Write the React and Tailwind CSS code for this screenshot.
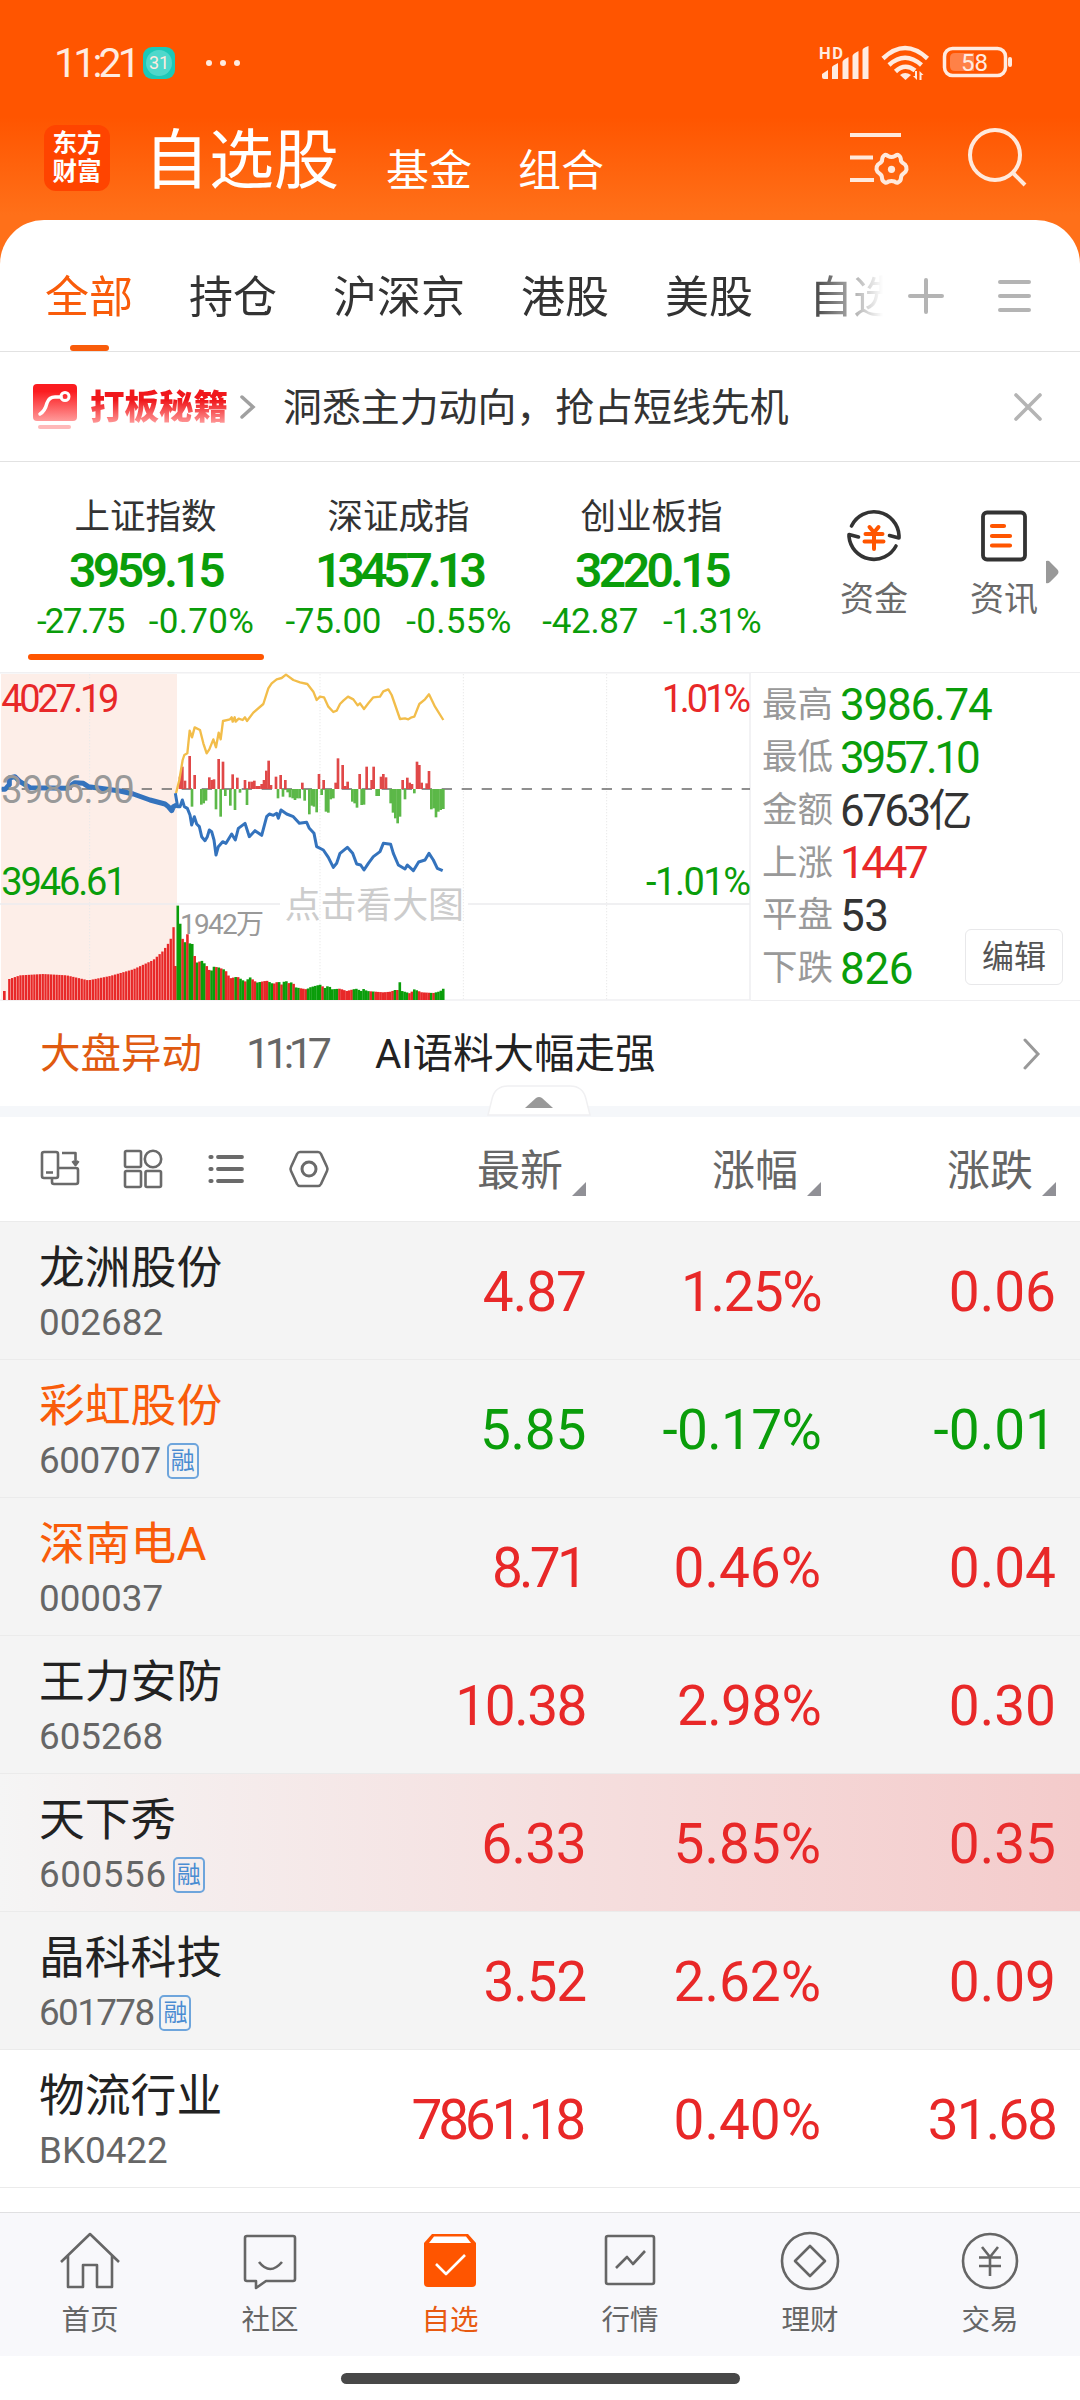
const RED = 'text-[#e82828]';
const GREEN = 'text-[#0a9d0a]';

const TABS = ['全部', '持仓', '沪深京', '港股', '美股', '自选'];

const INDICES = [
  { name: '上证指数', value: '3959.15', diff: '-27.75', pct: '-0.70%', vt: 'tracking-[-3.6px]', dt: 'tracking-[-1.8px]', active: true },
  { name: '深证成指', value: '13457.13', diff: '-75.00', pct: '-0.55%', vt: 'tracking-[-4.8px]', dt: 'tracking-[-0.3px]' },
  { name: '创业板指', value: '3220.15', diff: '-42.87', pct: '-1.31%', vt: 'tracking-[-3.6px]', dt: 'tracking-[-0.3px]' },
];

const STATS = [
  { label: '最高', value: '3986.74', color: GREEN, track: 'tracking-[-1.2px]' },
  { label: '最低', value: '3957.10', color: GREEN, track: 'tracking-[-3.2px]' },
  { label: '金额', value: '6763亿', color: 'text-[#333]', track: 'tracking-[-2.6px]' },
  { label: '上涨', value: '1447', color: RED, track: 'tracking-[-3.4px]' },
  { label: '平盘', value: '53', color: 'text-[#333]', track: 'tracking-[-0.5px]' },
  { label: '下跌', value: '826', color: GREEN, track: 'tracking-[-0.3px]' },
];

const STOCKS = [
  { name: '龙洲股份', code: '002682', price: '4.87', pct: '1.25%', diff: '0.06', pt: 'tracking-[-1px]', ct: 'tracking-[-1.5px]' },
  { name: '彩虹股份', code: '600707', price: '5.85', pct: '-0.17%', diff: '-0.01', hot: true, margin: true, down: true, codeTrack: 'tracking-[-0.4px]', pt: 'tracking-[-0.3px]', ct: 'tracking-[-0.7px]' },
  { name: '深南电A', code: '000037', price: '8.71', pct: '0.46%', diff: '0.04', hot: true, pt: 'tracking-[-3.8px] pr-[2px]' },
  { name: '王力安防', code: '605268', price: '10.38', pct: '2.98%', diff: '0.30', pt: 'tracking-[-1.5px]', ct: 'tracking-[-0.7px]' },
  { name: '天下秀', code: '600556', price: '6.33', pct: '5.85%', diff: '0.35', margin: true, flash: true, codeTrack: 'tracking-[0.6px]', pt: 'tracking-[-0.6px]' },
  { name: '晶科科技', code: '601778', price: '3.52', pct: '2.62%', diff: '0.09', margin: true, codeTrack: 'tracking-[-1.6px]', pt: 'tracking-[-1.2px]' },
  { name: '物流行业', code: 'BK0422', price: '7861.18', pct: '0.40%', diff: '31.68', plain: true, pt: 'tracking-[-4.2px] pr-[4px]', dt: 'tracking-[-2px]' },
];

const AVG_LINE =
  '528,400 538,360 548,300 553,285 562,280 569,212 576,232 584,202 600,210 610,250 620,280 628,268 640,238 648,262 656,218 662,238 669,183 690,178 695,172 698,185 704,172 707,185 716,176 728,180 735,172 741,183 760,158 790,132 805,85 815,70 830,58 845,54 858,44 880,60 900,67 922,72 940,95 950,120 960,110 972,112 985,140 1000,156 1010,152 1020,132 1030,122 1044,110 1060,118 1073,136 1080,130 1092,147 1105,130 1120,112 1140,110 1150,94 1165,88 1175,105 1200,177 1215,175 1225,178 1235,172 1243,170 1258,132 1275,118 1287,103 1305,140 1330,180';
const OPEN_LINE =
  '5,388 15,388 28,374 28,354 45,350 60,365 90,383 200,385 225,368 250,370 265,380 300,385 360,393 400,402 450,420 495,432 505,440 515,452 520,440 530,435';
const PRICE_LINE =
  '526,400 533,440 540,440 547,420 553,440 562,445 570,465 575,495 583,470 590,492 598,500 605,530 615,542 622,530 628,510 635,515 642,540 648,585 655,560 668,545 678,550 695,522 706,540 715,505 735,490 748,530 765,512 785,526 800,470 808,462 820,466 830,460 835,475 843,450 860,462 880,470 898,490 920,487 928,505 942,520 950,560 970,570 985,592 1000,622 1010,610 1020,580 1042,562 1058,580 1070,612 1082,615 1092,630 1105,610 1120,590 1140,575 1150,550 1172,553 1180,580 1195,615 1215,627 1222,615 1240,632 1256,606 1275,600 1287,580 1300,600 1312,625 1328,632';

const UP_BARS = [
  [540, 350], [547, 320], [555, 362], [569, 288], [584, 345], [628, 352], [635, 360], [642, 358], [656, 297], [669, 305],
  [698, 343], [712, 353], [735, 360], [748, 365], [756, 365], [763, 362], [770, 378], [778, 378], [785, 372], [792, 360],
  [799, 332], [806, 302], [813, 375], [828, 350], [842, 345], [856, 360], [907, 368], [957, 342], [971, 360], [1007, 368],
  [1014, 295], [1028, 315], [1036, 378], [1043, 365], [1079, 342], [1100, 320], [1115, 360], [1121, 320], [1143, 350],
  [1150, 342], [1158, 352], [1208, 360], [1222, 353], [1229, 368], [1236, 372], [1251, 305], [1258, 315], [1265, 368],
  [1280, 370], [1287, 333],
];
const DOWN_BARS = [
  [576, 440], [604, 434], [611, 430], [618, 422], [648, 448], [662, 470], [676, 408], [691, 437], [705, 450], [720, 398],
  [741, 435], [834, 415], [849, 410], [863, 397], [870, 412], [878, 415], [885, 420], [892, 415], [899, 415], [914, 422],
  [928, 463], [935, 437], [942, 440], [950, 457], [965, 405], [978, 455], [985, 458], [992, 418], [1000, 415], [1057, 425],
  [1064, 430], [1071, 443], [1085, 435], [1092, 434], [1130, 408], [1136, 408], [1172, 430], [1179, 458], [1186, 475],
  [1193, 490], [1200, 470], [1215, 418], [1243, 400], [1294, 448], [1301, 445], [1308, 472], [1315, 455], [1322, 450], [1330, 447],
];

const OPEN_VOLUME = [[28, 957], [60, 946], [130, 942], [200, 946], [265, 961], [330, 948], [400, 928], [460, 900], [490, 872], [505, 850], [513, 835], [521, 800]];
const VOLUME = [
  [526, 918], [533, 735], [540, 788], [547, 835], [554, 850], [562, 822], [569, 850], [577, 852], [583, 885], [590, 908], [605, 902],
  [618, 915], [632, 937], [640, 920], [655, 922], [676, 930], [690, 955], [712, 950], [735, 965], [750, 952], [770, 968], [800, 962],
  [820, 972], [835, 964], [845, 974], [856, 960], [864, 970], [878, 966], [886, 982], [920, 988], [930, 982], [960, 974], [978, 986], [985, 974],
  [994, 988], [1020, 986], [1040, 993], [1068, 986], [1084, 993], [1092, 986], [1100, 993], [1150, 997], [1172, 995], [1185, 990], [1196, 990],
  [1200, 962], [1206, 993], [1230, 1000], [1243, 988], [1265, 997], [1300, 999], [1320, 994], [1330, 986],
];
const VOLUME_COLORS = 'rggrgrggrgrggrrggrgrgrrrrgrggrggrrggrrrggrrgrggrgrggrrrggggggrggggggrrrrrrgggggggrgrrrrrrrrgrggggrrggrrrrrgrggggggg';

function levelAt(points, x) {
  const i = points.findIndex((p) => p[0] >= x);
  if (i <= 0) return points[i === 0 ? 0 : points.length - 1][1];
  const [x0, y0] = points[i - 1];
  const [x1, y1] = points[i];
  return y0 + ((y1 - y0) * (x - x0)) / (x1 - x0);
}

function IntradayChart() {
  const openBars = Array.from({ length: 60 }, (_, i) => 28 + i * 8.35);
  const bars = Array.from({ length: 112 }, (_, i) => 526 + i * 7.24);
  return (
    <svg className="h-[329px] w-[751px] shrink-0" viewBox="0 36 2253 987" fill="none">
      <rect x="3" y="42" width="528" height="980" fill="#fdeee8" />
      <g stroke="#e9e9e9" strokeWidth="3" strokeDasharray="4 5">
        <path d="M269 42V1020M960 42V1020M1390 42V1020M1820 42V1020" />
      </g>
      <path d="M0 38H2253M0 1020H2253M2250 36V1022" stroke="#f0f0f2" strokeWidth="5" />
      <path d="M0 732H840M1404 732H2250" stroke="#ebebee" strokeWidth="5" />
      <path d="M5 387H2250" stroke="#6b6b6b" strokeWidth="5" strokeDasharray="31 29" />
      {UP_BARS.map(([x, y]) => (
        <rect key={x} x={x - 4} y={y} width="8" height={387 - y} fill="#e04848" />
      ))}
      {DOWN_BARS.map(([x, y]) => (
        <rect key={x} x={x - 4} y="387" width="8" height={y - 387} fill="#5cb848" />
      ))}
      <rect x="9" y="993" width="8" height="27" fill="#e82828" />
      {openBars.map((x) => (
        <rect key={x} x={x - 3.5} y={levelAt(OPEN_VOLUME, x)} width="7" height={1020 - levelAt(OPEN_VOLUME, x)} fill="#e82828" />
      ))}
      {bars.map((x, i) => (
        <rect
          key={x}
          x={x - 3.8}
          y={levelAt(VOLUME, x)}
          width="7.8"
          height={1020 - levelAt(VOLUME, x)}
          fill={VOLUME_COLORS[i] === 'r' ? '#e82828' : '#0a9d0a'}
        />
      ))}
      <polyline points={AVG_LINE} stroke="#f2bd4a" strokeWidth="7" strokeLinejoin="round" />
      <polyline points={OPEN_LINE} stroke="#3473bd" strokeWidth="15" strokeLinejoin="round" />
      <polyline points={PRICE_LINE} stroke="#3473bd" strokeWidth="9" strokeLinejoin="round" />
      <g fontSize="114">
        <text x="4" y="155" textLength="354" fill="#e82828">4027.19</text>
        <text x="4" y="430" textLength="400" fill="#999">3986.90</text>
        <text x="4" y="704" textLength="376" fill="#0a9d0a">3946.61</text>
        <text x="1985" y="155" textLength="268" fill="#e82828">1.01%</text>
        <text x="1938" y="704" textLength="315" fill="#0a9d0a">-1.01%</text>
        <text x="540" y="822" fontSize="84" textLength="252" fill="#999">1942万</text>
        <text x="854" y="774" fontSize="108" textLength="538" fill="#ccc">点击看大图</text>
      </g>
    </svg>
  );
}

function StatusBar() {
  return (
    <div className="flex h-[115px] items-center pl-[54px] pr-[67px] pt-[11px] text-[#ffebe0]">
      <span className="w-[79px] whitespace-nowrap text-[41px] leading-none tracking-[-3.8px]">11:21</span>
      <span className="ml-[10px] flex h-8 w-8 items-center justify-center rounded-[9px] bg-[#1cc9b8]">
        <span className="flex h-[26px] w-[26px] items-center justify-center rounded-full bg-[#4fd8cb] text-[18px] leading-none">31</span>
      </span>
      <span className="ml-[31px] flex gap-2">
        <i className="h-1.5 w-1.5 rounded-full bg-current" />
        <i className="h-1.5 w-1.5 rounded-full bg-current" />
        <i className="h-1.5 w-1.5 rounded-full bg-current" />
      </span>
      <svg className="ml-auto h-9 w-[194px]" viewBox="0 0 194 36" fill="none">
        <text x="0" y="14" fontSize="16.5" fontWeight="700" fill="currentColor" textLength="24">HD</text>
        <g fill="currentColor">
          <path d="M3 29l6-4v9H5q-2 0-2-2zM13 22q0-1 6-4v16h-6zM23.500 17q0-2 6-5v22h-6zM33.500 11q0-2 6-5v28h-6zM43.500 5q0-2 6-4v33h-6z" />
          <path d="M81 30q5-4 11 0l-5.500 5z" />
          <path d="M98 26v9l-4-4h2v-5zM100.500 35v-9l4 4h-2v5z" />
        </g>
        <g stroke="currentColor" strokeWidth="4.500">
          <path d="M64 13.500Q86-7.500 108.500 13.500" />
          <path d="M70 20Q86 5.500 102.500 20" />
          <path d="M76.500 26.500Q86 17.500 96 25.500" />
        </g>
        <rect x="125.500" y="3.500" width="61" height="27" rx="8" stroke="currentColor" strokeWidth="3.500" />
        <path d="M136 8h19v18h-19q-5 0-5-5v-8q0-5 5-5z" fill="#ff8147" />
        <rect x="189" y="12" width="4" height="10" rx="2" fill="currentColor" />
        <text x="142" y="26" fontSize="24" fill="currentColor" textLength="27">58</text>
      </svg>
    </div>
  );
}

function Header() {
  return (
    <header className="h-[264px] bg-[linear-gradient(#ff5500_0px,#ff5500_117px,#ff7019_215px,#ff7019_264px)]">
      <StatusBar />
      <div className="flex h-[105px] whitespace-nowrap pl-11 text-white">
        <div className="mt-[10px] flex h-[66px] w-[66px] flex-col items-center justify-center rounded-xl bg-[#ff4400] text-[24.500px] font-bold leading-[28px]">
          <span>东方</span>
          <span>财富</span>
        </div>
        <h1 className="ml-[34px] mt-3 w-[196px] text-[65px] leading-[68px]">自选股</h1>
        <span className="ml-[46px] mt-8 text-[43px] leading-[48px]">基金</span>
        <span className="ml-[46px] mt-8 text-[43px] leading-[48px]">组合</span>
        <svg className="ml-auto mr-[52px] mt-[12px] h-[62px] w-[180px] text-[#ffe9dc]" viewBox="0 -2 180 62" fill="none" stroke="currentColor" strokeWidth="4">
          <path d="M2 6h51M2 28.500h23M2 51h24" />
          <path
            d="M36 26.500Q38 25 40 27Q43.500 29 47 27Q49 25 51 26.500Q53 28 53 32Q54 34 57 35.500Q58.500 37 58.500 40.500Q58 43 55.500 44.500Q53 46 53 49Q53 52 50 53.500Q48 54 46.500 52.500Q43.500 51.500 40.500 52.500Q39 54 37 53.500Q34 52 34 49Q34 46 31.500 44.500Q29 43 28.500 40.500Q28.500 37 30 35.500Q33 34 34 32Q34 28 36 26.500z"
            strokeLinejoin="round"
          />
          <circle cx="43.500" cy="40.300" r="3.600" fill="currentColor" stroke="none" />
          <circle cx="147" cy="26" r="25" />
          <path d="M165 44l12 12" />
        </svg>
      </div>
    </header>
  );
}

function TabRow() {
  return (
    <div className="flex h-[132px] items-center border-b border-[#e2e2e2] pl-[45px]">
      <div className="flex h-full w-[838px] gap-14 overflow-hidden whitespace-nowrap text-[44px] leading-[156px] text-[#333] [mask-image:linear-gradient(90deg,#000_91%,transparent_100%)]">
        {TABS.map((t, i) => (
          <div key={t} className={i === 0 ? 'flex flex-col items-center text-[#f95c0a]' : ''}>
            <div className="h-[125px]">{t}</div>
            {i === 0 && <div className="h-1.5 w-[39px] rounded-full bg-[#f95c0a]" />}
          </div>
        ))}
      </div>
      <svg className="ml-[23px] mt-[21px] h-10 w-[128px]" viewBox="0 0 128 40" stroke="#b4b4b4" strokeWidth="4" strokeLinecap="round">
        <path d="M4 20h32M20 4v32M94 6h29M94 20h29M94 34h29" />
      </svg>
    </div>
  );
}

function Banner() {
  return (
    <div className="flex h-[110px] items-center border-b border-[#e2e2e2] pl-[33px]">
      <svg className="h-[46px] w-11" viewBox="0 0 44 46" fill="none">
        <defs>
          <linearGradient id="badge" x1="0" y1="0" x2="0" y2="1">
            <stop offset="0.2" stopColor="#fb1c20" />
            <stop offset="1" stopColor="#ff9a9a" />
          </linearGradient>
        </defs>
        <rect width="44" height="37" rx="4" fill="url(#badge)" />
        <path d="M7 30Q12 27 14 19Q16 13 22 13H28" stroke="#fff" strokeWidth="3.500" strokeLinecap="round" />
        <circle cx="32" cy="12.500" r="4" stroke="#fff" strokeWidth="3" />
        <path d="M7 43h29" stroke="#ffb9b9" strokeWidth="4" strokeLinecap="round" />
      </svg>
      <span className="ml-[13px] bg-[linear-gradient(#f0181c_35%,#ff9c9c_88%)] bg-clip-text text-[34.500px] font-black leading-[44px] text-transparent">打板秘籍</span>
      <svg className="ml-3 h-6 w-4" viewBox="0 0 16 24" fill="none" stroke="#a0a0a0" strokeWidth="3.500" strokeLinecap="round">
        <path d="M2 2l11 10L2 22" />
      </svg>
      <span className="ml-[27px] mt-1 text-[38.900px] leading-none text-[#333]">洞悉主力动向，抢占短线先机</span>
      <svg className="ml-auto mr-[37px] h-[30px] w-[30px]" viewBox="0 0 30 30" stroke="#b4b4b4" strokeWidth="3.600" strokeLinecap="round">
        <path d="M3 3l24 24M27 3L3 27" />
      </svg>
    </div>
  );
}

function IndexBar() {
  return (
    <div className="flex h-[210px] whitespace-nowrap pl-[19px]">
      {INDICES.map((x) => (
        <div key={x.name} className="flex w-[253px] shrink-0 flex-col items-center">
          <span className="mt-8 text-[35.500px] leading-[46px] text-[#333]">{x.name}</span>
          <span className={`mt-1.5 text-[48px] font-semibold leading-[50px] ${GREEN} ${x.vt}`}>{x.value}</span>
          <span className={`mt-[5px] flex gap-[25px] text-[35px] leading-[42px] ${GREEN}`}>
            <span className={x.dt}>{x.diff}</span>
            <span className={x.pct === '-1.31%' ? 'tracking-[-1px]' : 'tracking-[0.3px]'}>{x.pct}</span>
          </span>
          {x.active && <i className="mt-[11px] h-1.5 w-[236px] rounded-full bg-[#ff5500]" />}
        </div>
      ))}
      <div className="ml-[61px] flex w-[70px] shrink-0 flex-col items-center pt-[46px] text-[34px] leading-[40px] text-[#6a6a6a]">
        <svg className="h-14 w-14" viewBox="0 0 56 56" fill="none" strokeLinecap="round" strokeLinejoin="round">
          <path d="M5.500 18A25 25 0 0 1 53 27.500V30L43.500 27.500M50 38A25 25 0 0 1 3 28.500V26.500L12.500 29" stroke="#333" strokeWidth="3.600" />
          <path d="M23.500 19l4.500 5.500 4.500-5.500M19.500 26h17M18.500 33.500h19M28 25v16" stroke="#ff5500" strokeWidth="4" />
        </svg>
        <span className="mt-[15px]">资金</span>
      </div>
      <div className="ml-[60px] flex w-[70px] shrink-0 flex-col items-center pt-[46px] text-[34px] leading-[40px] text-[#6a6a6a]">
        <svg className="h-14 w-12" viewBox="0 0 48 56" fill="none" strokeLinecap="round">
          <rect x="3" y="4.500" width="42" height="47" rx="4" stroke="#333" strokeWidth="3.800" />
          <path d="M12 18h12M12 28h18M12 37.500h18" stroke="#ff5500" strokeWidth="4.200" />
        </svg>
        <span className="mt-[15px]">资讯</span>
      </div>
      <svg className="ml-[6px] mt-[98px] h-6 w-4 shrink-0" viewBox="0 0 16 24" fill="#999">
        <path d="M1 1q3-1 4 1l7 7q3 3 0 6l-7 7q-2 2-4 1z" />
      </svg>
    </div>
  );
}

function ChartPanel() {
  return (
    <div className="flex h-[329px]">
      <IntradayChart />
      <div className="relative flex flex-1 flex-col border-y border-[#eeeef0] pl-[11px] pt-1.5">
        {STATS.map((s) => (
          <div key={s.label} className="flex h-[52.700px] items-center whitespace-nowrap leading-none">
            <span className="w-[78px] text-[35.500px] text-[#999]">{s.label}</span>
            <span className={`text-[44px] ${s.color} ${s.track}`}>{s.value}</span>
          </div>
        ))}
        <button className="absolute bottom-[15px] right-[17px] h-14 w-[98px] rounded-md border border-[#e8e8ea] bg-white text-[32px] leading-none text-[#555]">
          编辑
        </button>
      </div>
    </div>
  );
}

function NewsRow() {
  return (
    <div className="relative flex h-[116px] items-center border-b-[11px] border-[#f5f7fa] pl-10 text-[40.500px] leading-none">
      <span className="mt-0.5 text-[#e05a10]">大盘异动</span>
      <span className="ml-[44px] w-[85px] whitespace-nowrap text-[43px] tracking-[-5.300px] text-[#666]">11:17</span>
      <span className="ml-[44px] mt-0.5 text-[#222]">AI语料大幅走强</span>
      <svg className="ml-auto mr-[39px] h-8 w-[18px]" viewBox="0 0 18 32" fill="none" stroke="#999" strokeWidth="3" strokeLinecap="round">
        <path d="M2 2l13 14L2 30" />
      </svg>
      <svg className="absolute left-[486px] top-[83px] h-8 w-[106px]" viewBox="0 0 106 32">
        <path d="M2 31L6 15Q9 2 22 2H84Q97 2 100 15L104 31z" fill="#fff" stroke="#f0f0f2" strokeWidth="1.500" />
        <path d="M39 24L50 14q3-2 6 0L67 24z" fill="#999" />
      </svg>
    </div>
  );
}

function ColumnHead({ children }) {
  return (
    <div className="flex w-[235px] items-end justify-end">
      <span className="leading-[50px]">{children}</span>
      <svg className="ml-[9px] h-3.5 w-3.5" viewBox="0 0 14 14" fill="#909096">
        <path d="M14 0v14H0z" />
      </svg>
    </div>
  );
}

function TableHead() {
  return (
    <div className="flex h-[105px] items-center border-b border-[#ebebeb] pl-10 pr-6 text-[43px] text-[#666]">
      <svg className="h-10 w-[290px] shrink-0" viewBox="0 0 290 40" fill="none" stroke="#6a6a6a" strokeWidth="2.600" strokeLinejoin="round">
        <path d="M4 3h12q2 0 2 2v22q0 2-2 2H4q-2 0-2-2V5q0-2 2-2zM6 23.500h7M18 19h18q2 0 2 2v12q0 2-2 2H14q-2 0-2-2v-4M22 4h13.500v11M32.500 12l3 4 3-4" />
        <rect x="85" y="2" width="16" height="16" rx="1.500" />
        <circle cx="113" cy="10" r="8.200" />
        <rect x="85" y="22" width="16" height="16" rx="1.500" />
        <rect x="105.500" y="22" width="15.500" height="16" rx="1.500" />
        <path d="M178 8h24M178 20h24M178 32h24" strokeWidth="3.800" strokeLinecap="round" />
        <path d="M170.500 8h1M170.500 20h1M170.500 32h1" strokeWidth="4.200" strokeLinecap="round" />
        <path d="M260 3h18q2 0 3 2l6 13q1 2 0 4l-6 13q-1 2-3 2h-18q-2 0-3-2l-6-13q-1-2 0-4l6-13q1-2 3-2z" />
        <circle cx="269" cy="20" r="7" strokeWidth="3" />
      </svg>
      <div className="ml-auto flex pt-[3px]">
        <ColumnHead>最新</ColumnHead>
        <ColumnHead>涨幅</ColumnHead>
        <ColumnHead>涨跌</ColumnHead>
      </div>
    </div>
  );
}

function StockRow({ s }) {
  const bg = s.flash ? 'bg-linear-to-r from-[#f5f5f5] to-[#f4cbcb]' : s.plain ? 'bg-white' : 'bg-[#f4f4f4]';
  return (
    <div className={`flex h-[138px] items-center border-b border-[#ebebeb] pl-[39px] pr-6 ${bg}`}>
      <div className="flex-1 whitespace-nowrap pt-[11px]">
        <div className={`text-[45.800px] leading-[54px] ${s.hot ? 'text-[#f95c0a]' : 'text-[#222]'}`}>{s.name}</div>
        <div className="flex h-[54px] items-center text-[36.800px] leading-none text-[#666]">
          <span className={s.codeTrack || ''}>{s.code}</span>
          {s.margin && (
            <span className="ml-1.5 flex h-9 w-8 items-center justify-center rounded-[5px] border-2 border-[#6ea5dc] text-[24px] text-[#4a8cd2]">融</span>
          )}
        </div>
      </div>
      <div className={`flex pt-1 text-right text-[55px] leading-none ${s.down ? GREEN : RED}`}>
        <span className={`w-[235px] ${s.pt || ''}`}>{s.price}</span>
        <span className={`w-[235px] ${s.ct || ''}`}>{s.pct}</span>
        <span className={`w-[235px] ${s.dt || ''}`}>{s.diff}</span>
      </div>
    </div>
  );
}

const NAV = [
  { label: '首页', icon: <path d="M2 31L31 3L60 31M9 25V56H24V34H38V56H53V25" /> },
  {
    label: '社区',
    icon: <path d="M8 5H54Q56 5 56 7V48Q56 50 54 50H27L17 57V50H8Q6 50 6 48V7Q6 5 8 5zM20 31Q31 45 43 31" />,
  },
  {
    label: '自选',
    active: true,
    icon: (
      <>
        <path d="M13 3H49L57 12V52Q57 56 53 56H9Q5 56 5 52V12z" fill="#ff5500" stroke="none" />
        <path d="M15 5.500H47L52 12H10z" fill="#fff" stroke="none" />
        <path d="M17 33L27 43L46 24" stroke="#fff" />
      </>
    ),
  },
  { label: '行情', icon: <path d="M9 5H53Q55 5 55 7V51Q55 53 53 53H9Q7 53 7 51V7Q7 5 9 5zM17 37L28 26L34 33L46 20" /> },
  {
    label: '理财',
    icon: (
      <>
        <circle cx="31" cy="30" r="28" />
        <path d="M31 15L46 30L31 45L16 30z" />
      </>
    ),
  },
  {
    label: '交易',
    icon: (
      <>
        <circle cx="31" cy="30" r="27" />
        <path d="M23 16L31 26L39 16M20 26.500H42M20 35H42M31 26V45" />
      </>
    ),
  },
];

function BottomNav() {
  return (
    <nav className="flex h-[144px] border-t border-[#e0e0e2] bg-[#f8f8fb]">
      {NAV.map((n) => (
        <div key={n.label} className={`flex w-[180px] flex-col items-center pt-[18px] ${n.active ? 'text-[#e85a10]' : 'text-[#666]'}`}>
          <svg className="h-[60px] w-[62px]" viewBox="0 0 62 60" fill="none" stroke="currentColor" strokeWidth="2.600" strokeLinejoin="round">
            {n.icon}
          </svg>
          <span className="mt-3 text-[28.500px] leading-9">{n.label}</span>
        </div>
      ))}
    </nav>
  );
}

export default function App() {
  return (
    <div className="flex h-[2400px] w-[1080px] flex-col overflow-hidden bg-white font-[Roboto,'Noto_Sans_CJK_SC',sans-serif]">
      <Header />
      <main className="-mt-11 flex flex-1 flex-col rounded-t-[44px] bg-white">
        <TabRow />
        <Banner />
        <IndexBar />
        <ChartPanel />
        <NewsRow />
        <TableHead />
        {STOCKS.map((s) => (
          <StockRow key={s.code} s={s} />
        ))}
      </main>
      <BottomNav />
      <div className="flex h-11 justify-center pt-[17px]">
        <div className="h-[11px] w-[399px] rounded-full bg-[#484848]" />
      </div>
    </div>
  );
}
